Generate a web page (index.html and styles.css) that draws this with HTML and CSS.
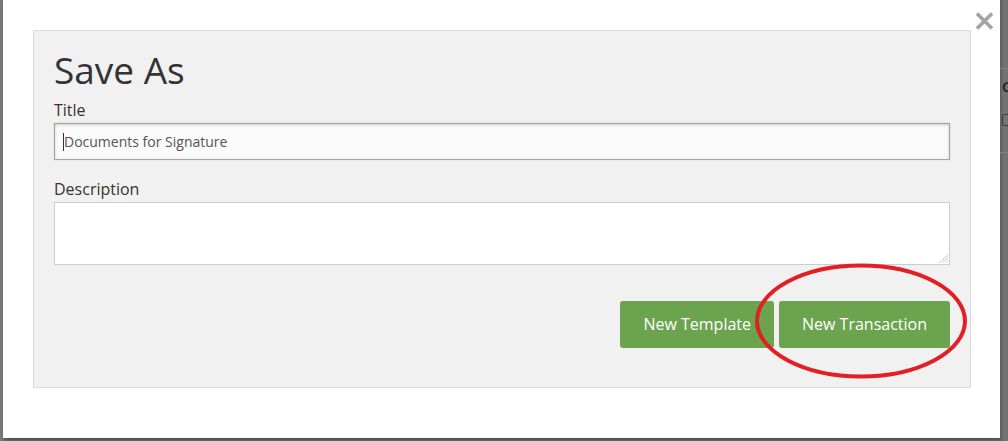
FILE: index.html
```html
<!DOCTYPE html>
<html>
<head>
<meta charset="utf-8">
<link rel="stylesheet" href="styles.css">
</head>
<body>
<div class="edge-left"></div>
<div class="modal">
  <button class="close" aria-label="Close">
    <svg width="19" height="18" viewBox="0 0 19 18"><path d="M2 1.5 L17 16.5 M17 1.5 L2 16.5" stroke="#a3a3a3" stroke-width="3.6" fill="none"/></svg>
  </button>
  <div class="panel">
    <h1 class="heading">Save As</h1>
    <label class="label">Title</label>
    <div class="input"><span class="caret"></span>Documents for Signature</div>
    <label class="label label-desc">Description</label>
    <div class="textarea">
      <svg class="grip" width="9" height="9" viewBox="0 0 9 9"><path d="M8.5 1 L1 8.5 M8.5 4 L4 8.5 M8.5 7 L7 8.5" stroke="#666" stroke-width="0.9" stroke-dasharray="1 1"/></svg>
    </div>
    <div class="actions">
      <button class="btn">New Template</button>
      <button class="btn">New Transaction</button>
      <svg class="circle" width="220" height="124" viewBox="0 0 220 124"><ellipse cx="110" cy="62" rx="104" ry="55.5" fill="none" stroke="#e31e24" stroke-width="4"/></svg>
    </div>
  </div>
</div>
<div class="edge-right">
  <div class="bg-line"></div>
  <div class="bg-letter">C</div>
  <div class="bg-check"></div>
  <div class="bg-line bg-line2"></div>
</div>
</body>
</html>
```

FILE: styles.css
```css
html, body {
  margin: 0;
  padding: 0;
}
body {
  display: flex;
  align-items: flex-start;
  width: 1008px;
  height: 441px;
  overflow: hidden;
  background: #6f6f6f;
  font-family: "Open Sans", "Liberation Sans", sans-serif;
  color: #333;
}
.edge-left {
  width: 3px;
  height: 441px;
  flex: none;
  background: #7a7a7a;
}
.modal {
  position: relative;
  flex: none;
  width: 997px;
  height: 438px;
  box-sizing: border-box;
  background: #fff;
  padding: 30px 29px 0 30px;
  box-shadow: 2px 1px 4px rgba(0,0,0,0.45);
}
.close {
  position: absolute;
  top: 12px;
  right: 6px;
  padding: 0;
  margin: 0;
  border: 0;
  background: none;
  width: 19px;
  height: 18px;
  display: block;
}
.close svg { display: block; }
.panel {
  border: 1px solid #dcdcdc;
  background: #f1f1f1;
  padding: 19px 20px 39px 20px;
  display: flex;
  flex-direction: column;
}
.heading {
  margin: 0 0 9px 0;
  font-size: 37px;
  line-height: 40px;
  font-weight: 400;
  color: #333;
}
.label {
  display: block;
  font-size: 16px;
  line-height: 22px;
  color: #3a3330;
  margin-bottom: 2px;
}
.label-desc {
  margin-top: 18px;
}
.input {
  height: 37px;
  box-sizing: border-box;
  border: 1px solid #a4a4a4;
  background: #fafafa;
  box-shadow: inset 0 1px 3px rgba(0,0,0,0.18), 0 0 2px rgba(0,0,0,0.12);
  font-size: 14px;
  line-height: 35px;
  color: #555;
  padding-left: 8px;
  display: flex;
  align-items: center;
}
.caret {
  display: inline-block;
  width: 1px;
  height: 18px;
  background: #333;
  margin-right: 0;
}
.textarea {
  position: relative;
  height: 63px;
  box-sizing: border-box;
  border: 1px solid #cdcdcd;
  background: #fff;
}
.grip {
  position: absolute;
  right: 1px;
  bottom: 1px;
}
.actions {
  position: relative;
  display: flex;
  justify-content: flex-end;
  gap: 5px;
  margin-top: 36px;
}
.btn {
  height: 47px;
  padding: 0 23px;
  border: 0;
  border-radius: 3px;
  background: #6ba34e;
  color: #fff;
  font-family: "Open Sans", "Liberation Sans", sans-serif;
  font-size: 16px;
  line-height: 47px;
}
.circle {
  position: absolute;
  right: -21px;
  top: -42px;
  pointer-events: none;
}
.edge-right {
  flex: 1;
  height: 441px;
  position: relative;
  overflow: hidden;
  background: linear-gradient(to right, #5e5e5e, #727272 4px);
}
.bg-line {
  height: 1px;
  background: #808080;
  margin-top: 68px;
}
.bg-line2 {
  margin-top: 26px;
}
.bg-letter {
  font-size: 15px;
  line-height: 16px;
  margin-top: 9px;
  margin-left: 2px;
  color: #1f1f1f;
  font-weight: 600;
}
.bg-check {
  width: 12px;
  height: 12px;
  box-sizing: border-box;
  border: 1px solid #3a3a3a;
  border-radius: 2px;
  margin-top: 20px;
  margin-left: 2px;
}
```
